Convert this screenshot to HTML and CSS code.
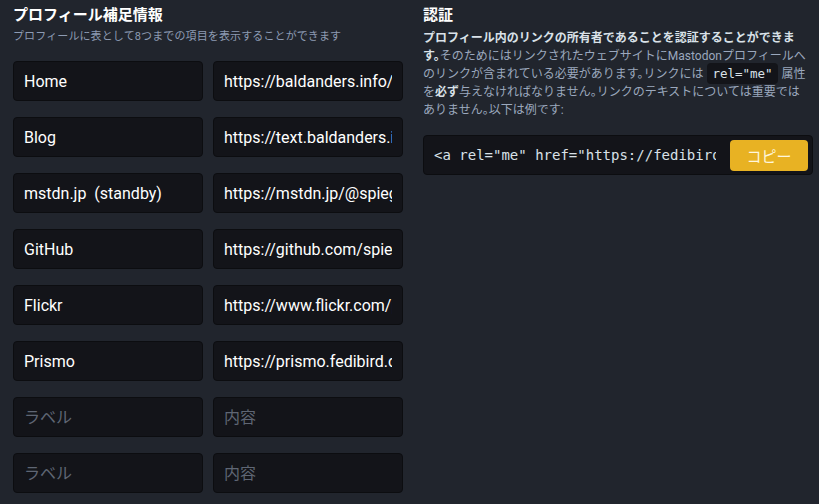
FILE: index.html
```html
<!DOCTYPE html>
<html lang="ja">
<head>
<meta charset="utf-8">
<link rel="stylesheet" href="styles.css">
</head>
<body>
<div class="page">
  <section class="col fields">
    <h2 class="title">プロフィール補足情報</h2>
    <p class="hint">プロフィールに表として8つまでの項目を表示することができます</p>
    <div class="rows">
      <div class="row"><div class="input"><span class="val">Home</span></div><div class="input"><span class="val">https://baldanders.info/</span></div></div>
      <div class="row"><div class="input"><span class="val">Blog</span></div><div class="input"><span class="val">https://text.baldanders.info/</span></div></div>
      <div class="row"><div class="input"><span class="val">mstdn.jp&nbsp;&nbsp;(standby)</span></div><div class="input"><span class="val">https://mstdn.jp/@spiegel</span></div></div>
      <div class="row"><div class="input"><span class="val">GitHub</span></div><div class="input"><span class="val">https://github.com/spiegel-im-spiegel</span></div></div>
      <div class="row"><div class="input"><span class="val">Flickr</span></div><div class="input"><span class="val">https://www.flickr.com/photos/spiegel</span></div></div>
      <div class="row"><div class="input"><span class="val">Prismo</span></div><div class="input"><span class="val">https://prismo.fedibird.com/</span></div></div>
      <div class="row"><div class="input ph"><span class="val">ラベル</span></div><div class="input ph"><span class="val">内容</span></div></div>
      <div class="row"><div class="input ph"><span class="val">ラベル</span></div><div class="input ph"><span class="val">内容</span></div></div>
    </div>
  </section>
  <section class="col verify">
    <h2 class="title">認証</h2>
    <p class="desc"><strong>プロフィール内のリンクの所有者であることを認証することができます。</strong>そのためにはリンクされたウェブサイトにMastodonプロフィールへのリンクが含まれている必要があります。リンクには <code>rel="me"</code> 属性を<strong>必ず</strong>与えなければなりません。リンクのテキストについては重要ではありません。以下は例です:</p>
    <div class="copybox">
      <div class="code">&lt;a rel="me" href="https://fedibird.com/@spiegel"&gt;Mastodon&lt;/a&gt;</div>
      <button class="copy">コピー</button>
    </div>
  </section>
</div>
</body>
</html>
```
FILE: styles.css
```css
html, body {
  margin: 0;
  padding: 0;
  background: #21252d;
  height: 100%;
  overflow: hidden;
}
body {
  font-family: Roboto, "Noto Sans CJK JP", sans-serif;
  color: #d9e1e8;
}
.page {
  display: grid;
  grid-template-columns: 390px 390px;
  column-gap: 20px;
  padding: 0 0 0 13px;
}
.title {
  margin: 0;
  padding-top: 5px;
  font-size: 15px;
  line-height: 20px;
  font-weight: 700;
  color: #ffffff;
}
.hint {
  margin: 5px 0 0;
  font-size: 11px;
  line-height: 14px;
  letter-spacing: 0.12px;
  color: #8d9bb3;
}
.rows {
  display: flex;
  flex-direction: column;
  gap: 16px;
  margin-top: 17px;
}
.row {
  display: grid;
  grid-template-columns: 190px 190px;
  column-gap: 10px;
}
.input {
  box-sizing: border-box;
  height: 40px;
  padding: 1px 10px 0;
  background: #131419;
  border: 1px solid #0c0d10;
  border-radius: 4px;
  font-size: 16px;
  line-height: 37px;
  color: #ffffff;
}
.val {
  display: block;
  white-space: nowrap;
  overflow: hidden;
}
.input.ph {
  color: #5f6674;
}
.desc {
  margin: 4px 0 0;
  font-size: 12px;
  line-height: 18px;
  color: #9ba8bd;
  width: 386px;
  font-feature-settings: "halt";
}
.desc strong {
  color: #d9e1e8;
  font-weight: 700;
}
.desc code {
  font-family: "DejaVu Sans Mono", monospace;
  font-size: 12.5px;
  line-height: 14px;
  background: #131419;
  color: #d9e1e8;
  padding: 3px 5px;
  margin: 0 1px;
  border-radius: 4px;
}
.copybox {
  box-sizing: border-box;
  margin-top: 16px;
  width: 390px;
  height: 40px;
  display: flex;
  align-items: center;
  background: #131419;
  border: 1px solid #0c0d10;
  border-radius: 4px;
  padding: 0 4px 0 10px;
  gap: 14px;
}
.code {
  flex: 1;
  min-width: 0;
  overflow: hidden;
  white-space: nowrap;
  font-family: "DejaVu Sans Mono", monospace;
  font-size: 14px;
  color: #d9e1e8;
}
.copy {
  flex: none;
  width: 78px;
  height: 31px;
  border: 0;
  border-radius: 4px;
  background: #e8b223;
  color: #fff6dc;
  font-family: Roboto, "Noto Sans CJK JP", sans-serif;
  font-size: 15px;
  padding: 0;
}
```
